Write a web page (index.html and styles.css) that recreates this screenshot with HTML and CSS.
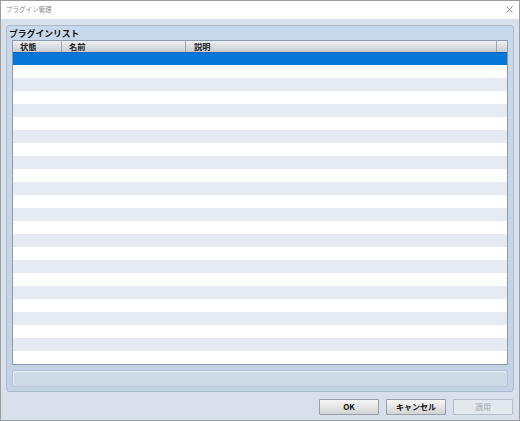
FILE: index.html
```html
<!DOCTYPE html>
<html lang="ja">
<head>
<meta charset="utf-8">
<title>プラグイン管理</title>
<link rel="stylesheet" href="styles.css">
</head>
<body>
<div class="window">
  <div class="titlebar">
    <span class="title">プラグイン管理</span>
    <svg class="close" width="7" height="7" viewBox="0 0 7 7"><path d="M0.5 0.5 L6.5 6.5 M6.5 0.5 L0.5 6.5" stroke="#7a7a7a" stroke-width="0.9" fill="none"/></svg>
  </div>
  <div class="content">
    <div class="group">
      <div class="group-label">プラグインリスト</div>
      <div class="table">
        <div class="thead">
          <div class="th">状態</div>
          <div class="th">名前</div>
          <div class="th">説明</div>
          <div class="th th-end"></div>
        </div>
        <div class="tbody">
          <div class="row selected"></div>
          <div class="row"></div><div class="row alt"></div>
          <div class="row"></div><div class="row alt"></div>
          <div class="row"></div><div class="row alt"></div>
          <div class="row"></div><div class="row alt"></div>
          <div class="row"></div><div class="row alt"></div>
          <div class="row"></div><div class="row alt"></div>
          <div class="row"></div><div class="row alt"></div>
          <div class="row"></div><div class="row alt"></div>
          <div class="row"></div><div class="row alt"></div>
          <div class="row"></div><div class="row alt"></div>
          <div class="row"></div><div class="row alt"></div>
          <div class="row"></div>
        </div>
      </div>
      <div class="status"></div>
    </div>
    <div class="buttons">
      <button class="btn">OK</button>
      <button class="btn">キャンセル</button>
      <button class="btn disabled">適用</button>
    </div>
  </div>
</div>
</body>
</html>
```
FILE: styles.css
```css
* { box-sizing: border-box; }
html, body { margin: 0; padding: 0; }
body {
  width: 520px;
  height: 421px;
  font-family: "Noto Sans CJK JP", "Noto Sans", sans-serif;
  background: #ffffff;
}
.window {
  width: 520px;
  height: 421px;
  border: 1px solid #9c9c9c;
  background: #d8e1eb;
  display: flex;
  flex-direction: column;
}
.titlebar {
  height: 18px;
  background: #ffffff;
  display: flex;
  align-items: center;
  justify-content: space-between;
  padding: 0 6px 2px 5px;
}
.title {
  font-size: 6.5px;
  color: #8a8a8a;
  line-height: 8px;
}
.close { display: block; margin-top: 1px; }
.content {
  flex: 1;
  padding: 6px 5px 0 5px;
  display: flex;
  flex-direction: column;
}
.group {
  height: 367px;
  border: 1px solid #a9bacd;
  border-radius: 3px;
  background: linear-gradient(#c8d9eb, #c3d2e3);
  padding: 0 5px 4px 5px;
  display: flex;
  flex-direction: column;
}
.group-label {
  height: 14px;
  line-height: 14px;
  font-size: 8.8px;
  font-weight: bold;
  color: #111;
  margin-left: -3px;
  padding-top: 1px;
}
.table {
  height: 325px;
  border: 1px solid #8d9aab;
  background: #ffffff;
  display: flex;
  flex-direction: column;
}
.thead {
  height: 11px;
  display: grid;
  grid-template-columns: 49px 124px 1fr 10px;
  background: linear-gradient(#eef0f3, #d9dce1 55%, #c7cbd1);
}
.th {
  border-right: 1px solid #9ea5af;
  font-size: 8.2px;
  font-weight: bold;
  color: #222;
  line-height: 11px;
  padding-left: 7px;
}
.th:nth-child(3) { padding-left: 8px; }
.th-end { border-right: none; }
.tbody { display: flex; flex-direction: column; }
.row { height: 13px; background: #ffffff; }
.row.alt { background: #e6ebf1; }
.row.selected {
  background: #0877d9;
  border-top: 1px solid #0a63b6;
}
.status {
  margin-top: 5px;
  height: 17px;
  border: 1px solid #b3c3d6;
  border-radius: 3px;
  background: #cfdae7;
  box-shadow: inset 1px 1px 0 #e6eef7;
}
.buttons {
  margin-top: 7px;
  display: flex;
  justify-content: flex-end;
  gap: 7px;
  padding-right: 1px;
}
.btn {
  width: 60px;
  height: 16px;
  margin: 0;
  padding: 0;
  border: 1px solid #9a9ea4;
  border-radius: 1px;
  background: linear-gradient(#f6f6f6, #e4e4e4 50%, #d3d4d6);
  font-family: "Noto Sans CJK JP", "Noto Sans", sans-serif;
  font-size: 8px;
  font-weight: bold;
  color: #111;
  line-height: 14px;
}
.btn.disabled {
  background: #e3e8ee;
  border-color: #b6bcc4;
  color: #a0a4aa;
  font-weight: normal;
}
```
